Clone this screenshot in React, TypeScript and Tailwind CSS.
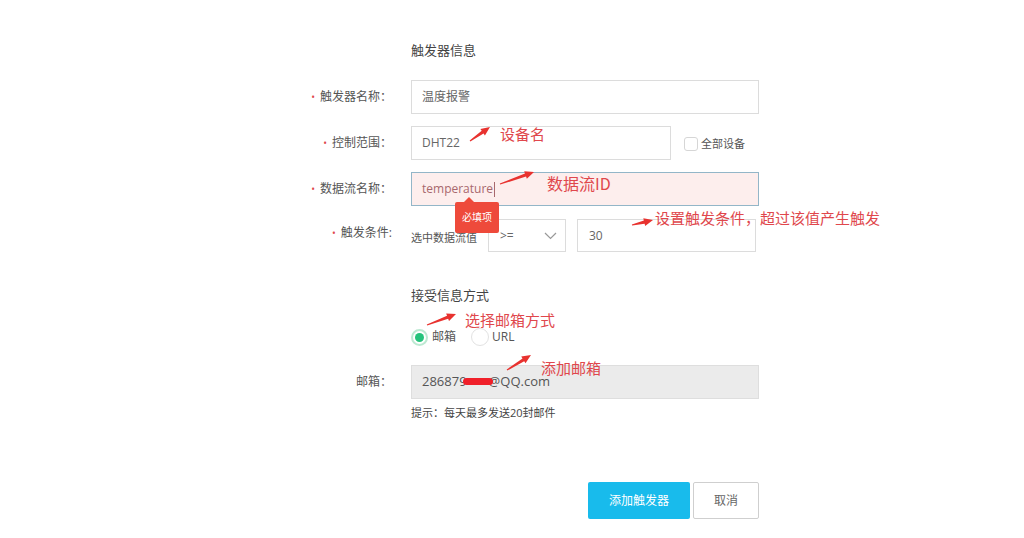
import { ReactNode } from "react";

const FONT = '"Open Sans", "Noto Sans CJK SC", sans-serif';

function arrowPoints(x1: number, y1: number, x2: number, y2: number) {
  const dx = x2 - x1;
  const dy = y2 - y1;
  const len = Math.hypot(dx, dy);
  const ux = dx / len;
  const uy = dy / len;
  const nx = -uy;
  const ny = ux;
  const bx = x2 - ux * 9;
  const by = y2 - uy * 9;
  const p = (x: number, y: number, k: number) => `${x + nx * k},${y + ny * k}`;
  return [
    p(x1, y1, 0.6),
    p(bx, by, 1.6),
    p(bx, by, 4),
    `${x2},${y2}`,
    p(bx, by, -4),
    p(bx, by, -1.6),
    p(x1, y1, -0.6),
  ].join(" ");
}

const arrows = [
  [470, 141, 490, 127],
  [500, 184, 534, 172],
  [632, 225, 653, 220],
  [427, 325, 456, 314],
  [507, 370, 531, 355],
];

function Label({ children, required }: { children: ReactNode; required?: boolean }) {
  return (
    <div className="w-[392px] shrink-0 text-right text-[12px] text-[#555]">
      {required && <span className="mr-[5px] text-[10px] text-[#e0474c]">•</span>}
      {children}
    </div>
  );
}

function Note({ className, children }: { className: string; children: ReactNode }) {
  return (
    <div
      className={`absolute whitespace-nowrap leading-[16px] text-[#e0474c] ${className}`}
      style={{ fontFamily: '"Noto Sans CJK SC", sans-serif' }}
    >
      {children}
    </div>
  );
}

export default function App() {
  return (
    <div
      className="relative h-[538px] w-[1024px] overflow-hidden bg-white text-[#555]"
      style={{ fontFamily: FONT }}
    >
      <div className="flex flex-col pt-[41px]">
        <div className="ml-[411px] h-[18px] text-[13px] leading-[18px] text-[#444]">触发器信息</div>

        <div className="mt-[21px] flex items-center">
          <Label required>触发器名称：</Label>
          <div className="ml-[19px] flex h-[34px] w-[348px] items-center border border-[#dcdcdc] px-[10px] text-[12px] text-[#666]">
            温度报警
          </div>
        </div>

        <div className="mt-[12px] flex items-center">
          <Label required>控制范围：</Label>
          <div className="ml-[19px] flex h-[34px] w-[260px] items-center border border-[#dcdcdc] px-[10px] text-[12px] text-[#666]">
            DHT22
          </div>
          <div className="ml-[13px] mt-[2px] flex items-center">
            <span className="h-[14px] w-[14px] rounded-[3px] border border-[#d6d6d6]" />
            <span className="ml-[3px] text-[11px] text-[#555]">全部设备</span>
          </div>
        </div>

        <div className="mt-[12px] flex items-center">
          <Label required>数据流名称：</Label>
          <div className="ml-[19px] flex h-[34px] w-[348px] items-center border border-[#93b6c8] bg-[#fdeeed] px-[10px] text-[12px] text-[#a8686d]">
            temperature
            <span className="ml-px h-[15px] w-px bg-[#a8686d]" />
          </div>
        </div>

        <div className="mt-[13px] flex items-center">
          <div className="-mt-[6px]">
            <Label required>触发条件:</Label>
          </div>
          <div className="ml-[19px] mt-[6px] text-[11px] text-[#555]">选中数据流值</div>
          <div className="ml-[11px] flex h-[33px] w-[78px] items-center justify-between border border-[#dcdcdc] pl-[11px] pr-[8px] text-[12px] text-[#666]">
            <span>&gt;=</span>
            <svg width="13" height="8" viewBox="0 0 13 8" fill="none">
              <path d="M1 1l5.5 5.5L12 1" stroke="#999" strokeWidth="1.2" />
            </svg>
          </div>
          <div className="ml-[11px] flex h-[33px] w-[179px] items-center border border-[#dcdcdc] px-[11px] text-[12px] text-[#666]">
            30
          </div>
        </div>

        <div className="ml-[411px] mt-[34px] h-[18px] text-[13px] leading-[18px] text-[#444]">接受信息方式</div>

        <div className="ml-[411px] mt-[24px] flex h-[18px] items-center text-[12px] leading-[14px]">
          <span className="flex h-[17px] w-[17px] items-center justify-center rounded-full border-2 border-[#bde9d2]">
            <span className="h-[9px] w-[9px] rounded-full bg-[#27c27c]" />
          </span>
          <span className="ml-[4px]">邮箱</span>
          <span className="ml-[15px] h-[18px] w-[18px] rounded-full border border-[#e2e2e2]" />
          <span className="ml-[3px]">URL</span>
        </div>

        <div className="mt-[19px] flex items-center">
          <Label>邮箱：</Label>
          <div className="ml-[19px] flex h-[34px] w-[348px] items-center border border-[#dedede] bg-[#ebebeb] px-[10px] text-[13px] text-[#555]">
            286879
            <span className="relative inline-block w-[22px]">
              <span className="invisible">000</span>
              <span className="absolute left-[-4px] top-[6px] h-[7px] w-[30px] rounded-full bg-[#f0202a]" />
            </span>
            @QQ.com
          </div>
        </div>

        <div className="ml-[411px] mt-[6px] text-[11px] leading-[16px] text-[#444]">提示：每天最多发送20封邮件</div>

        <div className="ml-[588px] mt-[61px] flex gap-[3px]">
          <button className="h-[37px] w-[102px] rounded-[2px] bg-[#18bbec] text-[12px] text-white">添加触发器</button>
          <button className="h-[37px] w-[66px] rounded-[2px] border border-[#cfcfcf] bg-white text-[12px] text-[#666]">取消</button>
        </div>
      </div>

      <div className="absolute left-[455px] top-[202px] flex h-[31px] w-[44px] items-center justify-center rounded-[2px] bg-[#ee4a3b] text-[10px] text-white">
        <span className="absolute -top-[5px] left-[9px] h-0 w-0 border-x-[5px] border-b-[5px] border-x-transparent border-b-[#ee4a3b]" />
        必填项
      </div>

      <Note className="left-[500px] top-[126px] text-[15px]">设备名</Note>
      <Note className="left-[547px] top-[175px] text-[16px]">数据流ID</Note>
      <Note className="left-[655px] top-[210px] text-[15px]">设置触发条件，超过该值产生触发</Note>
      <Note className="left-[465px] top-[312px] text-[15px]">选择邮箱方式</Note>
      <Note className="left-[541px] top-[360px] text-[15px]">添加邮箱</Note>

      <svg className="pointer-events-none absolute left-0 top-0" width="1024" height="538">
        {arrows.map(([x1, y1, x2, y2], i) => (
          <polygon key={i} points={arrowPoints(x1, y1, x2, y2)} fill="#e8322f" />
        ))}
      </svg>
    </div>
  );
}
